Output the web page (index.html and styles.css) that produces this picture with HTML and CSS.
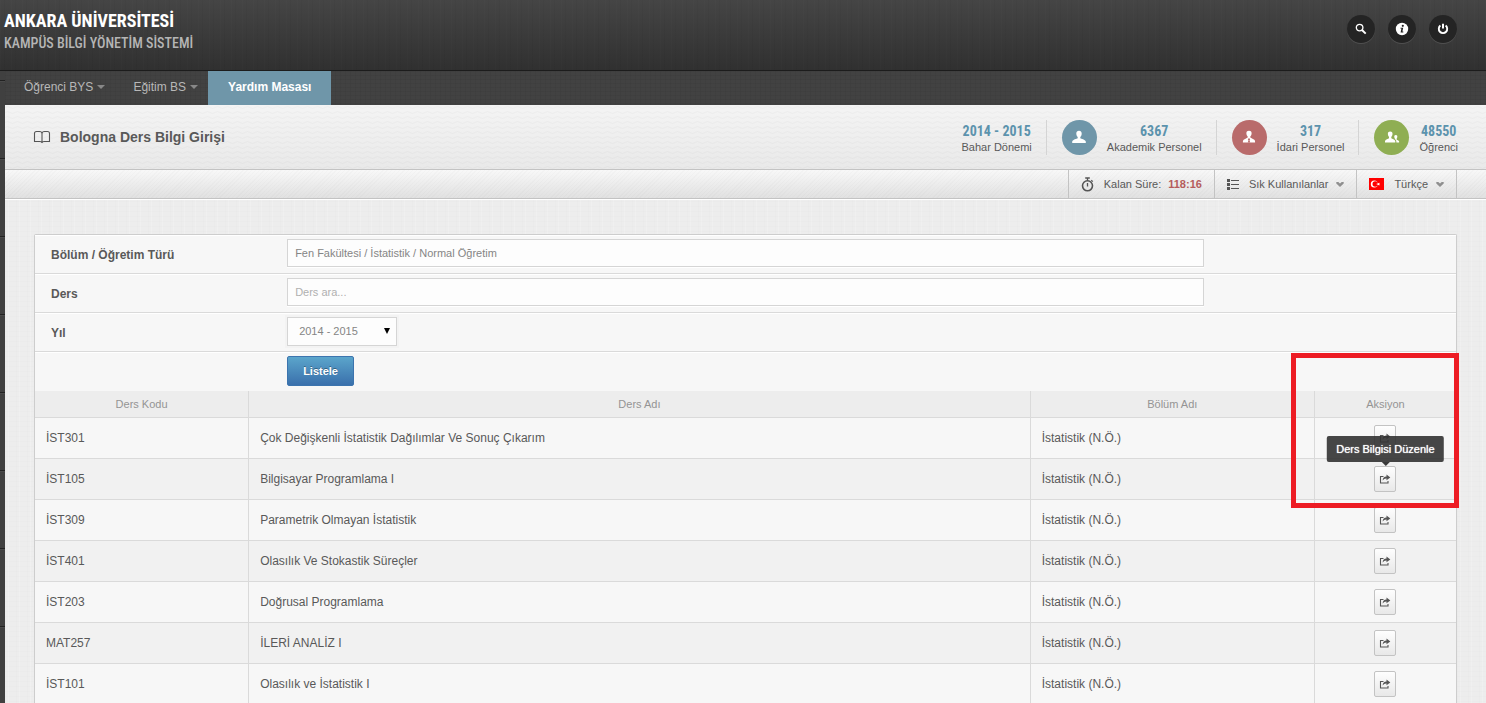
FILE: index.html
```html
<!DOCTYPE html>
<html lang="tr">
<head>
<meta charset="utf-8">
<title>Bologna Ders Bilgi Girişi</title>
<link rel="stylesheet" href="styles.css">
</head>
<body>
<svg class="defs" aria-hidden="true">
  <symbol id="share" viewBox="0 0 12 10"><path d="M4.500 2.500H1.500v6.500h7.500V7" fill="none" stroke="#555" stroke-width="1.100"/><path d="M3.600 6.400C3.800 3.600 5.200 2.500 7.500 2.400V.4L11.300 3.500 7.500 6.200V4.400C5.800 4.300 4.700 5 3.600 6.400z" fill="#555"/></symbol>
</svg>
<header class="top">
  <div class="brand">
    <div class="brand-name">ANKARA ÜNİVERSİTESİ</div>
    <div class="brand-sub">KAMPÜS BİLGİ YÖNETİM SİSTEMİ</div>
  </div>
  <div class="tools">
    <button class="tool" aria-label="Ara"><svg width="12" height="12" viewBox="0 0 12 12"><circle cx="4.600" cy="4.600" r="3.300" fill="none" stroke="#fff" stroke-width="1.300"/><path d="M7 7l3.700 3.700" stroke="#fff" stroke-width="1.900"/></svg></button>
    <button class="tool" aria-label="Bilgi"><svg width="14" height="14" viewBox="0 0 14 14"><circle cx="7" cy="7" r="6.200" fill="#fff"/><circle cx="7.800" cy="3.800" r="1.100" fill="#222"/><path d="M5.400 5.800h2.800L7.400 9.600h.9v.8H5.600l.8-3.800h-1z" fill="#222"/></svg></button>
    <button class="tool" aria-label="Çıkış"><svg width="12" height="12" viewBox="0 0 12 12"><path d="M3.400 2.600a4.200 4.200 0 1 0 5.200 0" fill="none" stroke="#fff" stroke-width="1.900"/><path d="M6 .8v4.600" stroke="#fff" stroke-width="2"/></svg></button>
  </div>
</header>
<div class="shell">
  <nav class="menu">
    <a class="menu-item" href="#">Öğrenci BYS<span class="caret"></span></a>
    <a class="menu-item" href="#">Eğitim BS<span class="caret"></span></a>
    <a class="menu-item active" href="#">Yardım Masası</a>
  </nav>
  <section class="heading">
    <svg width="18" height="14" viewBox="0 0 18 14" fill="none" stroke="#555" stroke-width="1.100" aria-hidden="true"><path d="M9 13V3.500C9 1.800 8 1.500 6.500 1.500H3.500C2 1.500 1.500 2.500 1.500 3.500V11.500H7C8.300 11.500 9 12 9 13zM9 13V3.500c0-1.700 1-2 2.500-2h3c1.500 0 2 1 2 2V11.500H11c-1.300 0-2 .5-2 1.500z"/></svg>
    <h1>Bologna Ders Bilgi Girişi</h1>
    <div class="stats">
      <div class="stat"><div class="figures"><strong>2014 - 2015</strong><span>Bahar Dönemi</span></div></div>
      <div class="stat"><span class="disc blue"><svg width="16" height="14" viewBox="0 0 16 14"><path d="M8 .8c2 0 2.900 1.400 2.700 3.200C10.500 5.600 9.900 6.500 9.300 7v1.200c1 .9 4.700 1 5.500 3.300V13H1.200v-1.500C2 9.200 5.700 9.100 6.700 8.200V7C6.100 6.500 5.500 5.600 5.300 4 5.100 2.200 6 .8 8 .8z"/></svg></span><div class="figures"><strong>6367</strong><span>Akademik Personel</span></div></div>
      <div class="stat"><span class="disc red"><svg width="14" height="14" viewBox="0 0 14 14"><path d="M7 .8c2 0 2.800 1.300 2.600 2.900C9.400 5.300 8.800 6 8.300 6.400v1.200l4 2.200c.7.500.8 1.500.8 2.700H.9c0-1.200.1-2.200.8-2.700l4-2.200V6.400C5.200 6 4.600 5.300 4.400 3.700 4.200 2.100 5 .8 7 .8z"/><path d="M7 8l1.200 1.200L7.500 10.300 8.200 12.500H5.800l.7-2.200L5.800 9.200z" fill="#b96b6b"/></svg></span><div class="figures"><strong>317</strong><span>İdari Personel</span></div></div>
      <div class="stat"><span class="disc green"><svg width="16" height="14" viewBox="0 0 16 14"><path d="M6.200 1.500c1.800 0 2.500 1.200 2.300 2.800C8.300 5.700 7.800 6.400 7.300 6.800v1.400c.8.800 3.500 1 4 2.800V12.500H1V11c.5-1.800 3.200-2 4-2.800V6.800C4.600 6.400 4.100 5.700 3.900 4.300 3.700 2.700 4.400 1.500 6.200 1.500z"/><path d="M11.800 5c1.200 0 1.700.9 1.500 2-.1.900-.4 1.400-.7 1.700v.7c.5.600 2.200.7 2.500 1.900v1.200h-2.700c0-2.300-.6-2.700-1.800-3.400l.4-.4C10.600 8.300 10.400 7.700 10.300 7c-.2-1.100.3-2 1.500-2z"/></svg></span><div class="figures"><strong>48550</strong><span>Öğrenci</span></div></div>
    </div>
  </section>
  <div class="bar">
    <div class="bar-item"><svg width="13" height="15" viewBox="0 0 13 15" fill="none" stroke="#555"><circle cx="6.500" cy="8.800" r="5" stroke-width="1.600"/><path d="M4.200 1h4.600M6.500 1v3M6.500 6v3.500M10.300 3.200l1.400 1.400" stroke-width="1.300"/></svg><span>Kalan Süre:</span><b>118:16</b></div>
    <button class="bar-item"><svg width="12" height="11" viewBox="0 0 12 11" fill="#555"><path d="M0 0h3v3H0zM0 4h3v3H0zM0 8h3v3H0zM4 1h8v1H4zM4 5h8v1H4zM4 9h8v1H4z"/></svg><span>Sık Kullanılanlar</span><svg class="chev" width="8" height="6" viewBox="0 0 8 6"><path d="M.3 1h2L4 2.500 5.700 1h2v1.500L4 6 .3 2.500z"/></svg></button>
    <button class="bar-item"><svg width="15" height="12" viewBox="0 0 15 12"><path fill="#f00" d="M0 0h15v12H0z"/><circle cx="5.300" cy="6" r="3.500" fill="#fff"/><circle cx="6.300" cy="6" r="2.800" fill="#f00"/><path d="M7.200 6l3.300-1.300-.1 2.700z" fill="#fff"/></svg><span>Türkçe</span><svg class="chev" width="8" height="6" viewBox="0 0 8 6"><path d="M.3 1h2L4 2.500 5.700 1h2v1.500L4 6 .3 2.500z"/></svg></button>
  </div>
  <main class="panel">
    <form>
      <div class="row"><label for="dept">Bölüm / Öğretim Türü</label><input id="dept" class="field" type="text" value="Fen Fakültesi / İstatistik / Normal Öğretim"></div>
      <div class="row"><label for="course">Ders</label><input id="course" class="field" type="text" placeholder="Ders ara..."></div>
      <div class="row"><label for="year">Yıl</label><div class="select-box"><select id="year"><option>2014 - 2015</option></select></div></div>
      <div class="row last"><span class="blank"></span><button class="submit" type="button">Listele</button></div>
    </form>
    <table>
      <colgroup><col class="c-code"><col class="c-name"><col class="c-dept"><col class="c-act"></colgroup>
      <thead><tr><th>Ders Kodu</th><th>Ders Adı</th><th>Bölüm Adı</th><th>Aksiyon</th></tr></thead>
      <tbody>
        <tr><td>İST301</td><td>Çok Değişkenli İstatistik Dağılımlar Ve Sonuç Çıkarım</td><td>İstatistik (N.Ö.)</td><td><button class="act" aria-label="Düzenle"><svg><use href="#share"/></svg></button></td></tr>
        <tr><td>İST105</td><td>Bilgisayar Programlama I</td><td>İstatistik (N.Ö.)</td><td><button class="act" aria-label="Düzenle"><svg><use href="#share"/></svg><span class="tip">Ders Bilgisi Düzenle</span></button></td></tr>
        <tr><td>İST309</td><td>Parametrik Olmayan İstatistik</td><td>İstatistik (N.Ö.)</td><td><button class="act" aria-label="Düzenle"><svg><use href="#share"/></svg></button></td></tr>
        <tr><td>İST401</td><td>Olasılık Ve Stokastik Süreçler</td><td>İstatistik (N.Ö.)</td><td><button class="act" aria-label="Düzenle"><svg><use href="#share"/></svg></button></td></tr>
        <tr><td>İST203</td><td>Doğrusal Programlama</td><td>İstatistik (N.Ö.)</td><td><button class="act" aria-label="Düzenle"><svg><use href="#share"/></svg></button></td></tr>
        <tr><td>MAT257</td><td>İLERİ ANALİZ I</td><td>İstatistik (N.Ö.)</td><td><button class="act" aria-label="Düzenle"><svg><use href="#share"/></svg></button></td></tr>
        <tr><td>İST101</td><td>Olasılık ve İstatistik I</td><td>İstatistik (N.Ö.)</td><td><button class="act" aria-label="Düzenle"><svg><use href="#share"/></svg></button></td></tr>
      </tbody>
    </table>
    <div class="marker"></div>
  </main>
</div>
</body>
</html>
```
FILE: styles.css
```css
* { box-sizing: border-box; }
body {
  margin: 0;
  height: 100vh;
  overflow: hidden;
  display: flex;
  flex-direction: column;
  font: 12px/16px "Liberation Sans", Arial, sans-serif;
  color: #595959;
  background: #404040;
}
button, input, select { font: inherit; color: inherit; margin: 0; }
button { cursor: pointer; }
.defs { position: absolute; width: 0; height: 0; }

/* Header */
.top {
  flex: none;
  display: flex;
  justify-content: space-between;
  align-items: flex-start;
  height: 71px;
  padding: 8px 29px 0 4px;
  border-bottom: 1px solid #1c1c1c;
  background:
    repeating-linear-gradient(90deg, rgba(255,255,255,.012) 0 1px, transparent 1px 4px, rgba(0,0,0,.03) 4px 5px, transparent 5px 11px),
    linear-gradient(#454545, #303030);
}
.brand { font-family: "Roboto Condensed", "Liberation Sans Narrow", "Liberation Sans", sans-serif; font-weight: bold; }
.brand-name { font-size: 18px; line-height: 25px; color: #fff; }
.brand-sub { font-size: 14px; line-height: 20px; font-weight: 500; color: #b5b5b5; }
.tools { display: flex; gap: 13px; padding-top: 7px; }
.tool {
  display: flex;
  align-items: center;
  justify-content: center;
  width: 28px;
  height: 28px;
  padding: 0;
  border: 0;
  border-radius: 50%;
  background: #242424;
  box-shadow: 0 1px 0 #505050;
}

/* Page column with the dark strip on its left */
.shell {
  flex: 1;
  min-height: 0;
  border-left: 5px solid #2e2e2e;
  border-image: repeating-linear-gradient(#404040 0 9px, #222 9px 10px, #4a4a4a 10px 11px, #404040 11px 78px) 0 0 0 5;
  background:
    repeating-linear-gradient(90deg, rgba(0,0,0,.008) 0 1px, transparent 1px 3px, rgba(255,255,255,.15) 3px 4px, transparent 4px 11px),
    repeating-linear-gradient(rgba(0,0,0,.008) 0 1px, transparent 1px 5px),
    #ededed;
}
.menu {
  display: flex;
  height: 34px;
  padding-left: 1px;
  background:
    repeating-linear-gradient(90deg, rgba(0,0,0,.04) 0 1px, transparent 1px 5px),
    repeating-linear-gradient(rgba(0,0,0,.04) 0 1px, transparent 1px 4px),
    #424242;
}
.menu-item {
  display: flex;
  align-items: center;
  padding: 0 9px 2px 18px;
  margin-right: 1px;
  color: #b8b8b8;
  text-decoration: none;
}
.menu-item.active { margin: 0; padding: 0 20px 2px; color: #fff; font-weight: bold; background: #6f96a9; }
.caret { margin-left: 4px; border: 4px solid transparent; border-top-color: #888; border-bottom: 0; }

/* Title and figures */
.heading {
  display: flex;
  align-items: center;
  height: 65px;
  padding: 0 28px;
  border-bottom: 1px solid #c3c3c3;
  background:
    url("data:image/svg+xml,%3Csvg xmlns='http://www.w3.org/2000/svg' width='10' height='5'%3E%3Cpath d='M0 2.500Q2.500 .5 5 2.500T10 2.500' fill='none' stroke='%23000' stroke-opacity='.025'/%3E%3C/svg%3E"),
    linear-gradient(#f4f4f4, #e9e9e9);
}
h1 { margin: 0 0 0 9px; font-size: 14px; line-height: 18px; color: #595959; }
.stats { display: flex; margin-left: auto; }
.stat { display: flex; align-items: center; gap: 10px; padding: 0 14px 0 15px; height: 35px; border-right: 1px solid #d4d4d4; }
.stat:last-child { padding-right: 0; border: 0; }
.figures { display: flex; flex-direction: column; align-items: center; padding-top: 2px; font-size: 11px; line-height: 14px; white-space: nowrap; }
.figures strong { font: bold 14px/17px "Roboto Condensed", "Liberation Sans Narrow", "Liberation Sans", sans-serif; color: #5c93ad; }
.disc { display: flex; align-items: center; justify-content: center; width: 35px; height: 35px; border-radius: 50%; fill: #fff; }
.blue { background: #6f96a9; }
.red { background: #b96b6b; }
.green { background: #8fae53; }

/* Toolbar */
.bar {
  display: flex;
  justify-content: flex-end;
  height: 29px;
  padding-right: 29px;
  border-bottom: 1px solid #c3c3c3;
  box-shadow: 0 1px 0 #fff;
  background:
    repeating-linear-gradient(135deg, rgba(0,0,0,.015) 0 1px, transparent 1px 3px),
    linear-gradient(#f8f8f8, #e1e1e1);
}
.bar-item {
  display: flex;
  align-items: center;
  padding: 0 12px;
  border: 0;
  border-left: 1px solid #c3c3c3;
  background: none;
  font-size: 11px;
}
.bar-item:last-child { border-right: 1px solid #c3c3c3; }
.bar-item span { margin-left: 10px; }
.bar-item b { margin-left: 7px; color: #b55d5c; }
.chev { margin-left: 8px; fill: #8f8f8f; }

/* Form */
.panel {
  position: relative;
  margin: 35px 29px 0;
  border: 1px solid #cdcdcd;
  border-bottom: 0;
  border-radius: 2px 2px 0 0;
  background: #f7f7f7;
}
.row {
  display: flex;
  align-items: center;
  height: 39px;
  padding: 0 16px 2px;
  border-bottom: 1px solid #dadada;
  box-shadow: inset 0 1px 0 #fff;
}
.row label, .blank { flex: 0 0 17%; padding-top: 3px; font-weight: bold; }
.row.last { border: 0; padding-bottom: 1px; }
.field {
  width: 66%;
  height: 28px;
  padding: 0 7px;
  border: 1px solid #d5d5d5;
  background: #fdfdfd;
  box-shadow: 0 1px 0 #fff;
  font-size: 11px;
  color: #858585;
}
.field::placeholder { color: #b0b0b0; }
.select-box { position: relative; }
.select-box::after {
  content: "";
  position: absolute;
  right: 7px;
  top: 11px;
  border: 3px solid transparent;
  border-top: 6px solid #000;
  border-bottom: 0;
}
select {
  display: block;
  appearance: none;
  width: 110px;
  height: 29px;
  padding: 0 11px;
  border: 1px solid #d5d5d5;
  border-radius: 0;
  background: #fdfdfd;
  box-shadow: 0 0 0 2px #f3f3f3;
  font-size: 11px;
  color: #858585;
}
.submit {
  height: 30px;
  padding: 0 15px;
  border: 1px solid #3c74ae;
  border-radius: 2px;
  background: linear-gradient(#5ba5cb, #3a70ac);
  color: #fff;
  font-size: 11px;
  font-weight: bold;
  text-shadow: 0 -1px 0 rgba(0,0,0,.35);
}

/* Course list */
table { width: 100%; table-layout: fixed; border-collapse: separate; border-spacing: 0; }
.c-code { width: 15%; }
.c-name { width: 55%; }
.c-dept { width: 20%; }
.c-act { width: 10%; }
th { height: 27px; padding: 0; border-bottom: 1px solid #dadada; background: #ededed; color: #949494; font-size: 11px; font-weight: normal; }
td { height: 41px; padding: 0 11px; border-bottom: 1px solid #dadada; }
th + th, td + td { border-left: 1px solid #dadada; }
tbody tr:nth-child(even) td { background: #f1f1f1; }
td:last-child { padding: 0; text-align: center; }
.act {
  position: relative;
  display: inline-flex;
  align-items: center;
  justify-content: center;
  width: 22px;
  height: 26px;
  padding: 0;
  border: 1px solid #c3c3c3;
  border-radius: 2px;
  background: linear-gradient(#fefefe, #e8e8e8);
  vertical-align: middle;
}
.act svg { width: 12px; height: 10px; }
.tip {
  position: absolute;
  z-index: 1;
  bottom: 29px;
  left: 50%;
  transform: translateX(-50%);
  padding: 5px 9px;
  border-radius: 2px;
  background: rgba(50,50,50,.9);
  color: #fff;
  font-size: 11px;
  text-shadow: 0 0 1px #fff;
  white-space: nowrap;
}
.tip::after {
  content: "";
  position: absolute;
  top: 100%;
  left: 50%;
  margin-left: -4px;
  border: 4px solid transparent;
  border-top-color: #3a3a3a;
  border-bottom: 0;
}
.marker {
  position: absolute;
  z-index: 2;
  top: 118px;
  right: -3px;
  width: 168px;
  height: 155px;
  border: 5px solid #ed1c24;
  pointer-events: none;
}
```
